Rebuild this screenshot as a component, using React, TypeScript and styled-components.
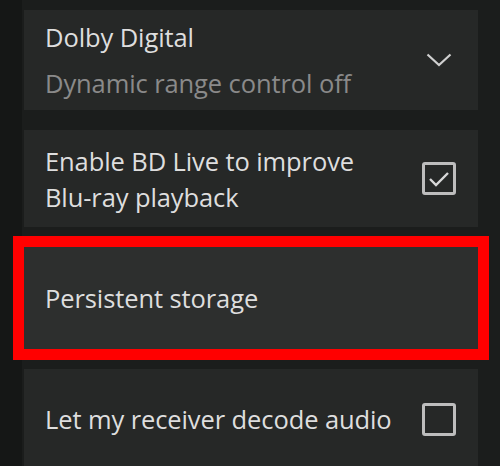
import React from "react";
import styled, {createGlobalStyle} from "styled-components";

const GlobalStyle = createGlobalStyle`
  html, body {
    margin: 0;
    padding: 0;
    background: #1b1d1c;
  }
  body {
    font-family: "Open Sans", "Noto Sans", sans-serif;
    color: #e4e4e4;
  }
`;

const Screen = styled.div`
  width: 500px;
  height: 466px;
  overflow: hidden;
  display: flex;
  background: #1b1d1c;
`;

const SideStrip = styled.div`
  width: 22px;
  flex-shrink: 0;
  background: #151716;
`;

const List = styled.div`
  flex: 1;
  display: flex;
  flex-direction: column;
  gap: 20px;
  padding: 10px 22px 0 2px;
`;

const Card = styled.div<{$height: number; $selected?: boolean}>`
  height: ${p => p.$height}px;
  flex-shrink: 0;
  display: flex;
  align-items: center;
  justify-content: space-between;
  padding: 0 22px 0 21px;
  background: ${p => (p.$selected ? "#2d2f2e" : "#262827")};
  outline: ${p => (p.$selected ? "11px solid #ff0000" : "none")};
`;

const TextBlock = styled.div`
  display: flex;
  flex-direction: column;
`;

const Title = styled.div`
  font-size: 25.5px;
  line-height: 36px;
  color: #dedede;
  letter-spacing: -0.1px;
`;

const Subtitle = styled.div`
  font-size: 25.5px;
  line-height: 36px;
  margin-top: 10px;
  color: #8a8a8a;
  letter-spacing: -0.1px;
`;

const Chevron = styled.svg`
  width: 26px;
  height: 14px;
  margin-right: 4px;
`;

const Box = styled.div`
  width: 34px;
  height: 33px;
  box-sizing: border-box;
  border: 3px solid #bdbdbd;
  border-radius: 3px;
  display: flex;
  align-items: center;
  justify-content: center;
`;

const Checkbox = ({checked}: {checked: boolean}) => (
    <Box>
        {checked && (
            <svg width="22" height="16" viewBox="0 0 22 16">
                <path d="M2 8 L8 14 L20 2" fill="none" stroke="#d8d8d8" strokeWidth="2.4" />
            </svg>
        )}
    </Box>
);

export default function App() {
    return (
        <>
            <GlobalStyle />
            <Screen>
                <SideStrip />
                <List>
                    <Card $height={100}>
                        <TextBlock>
                            <Title>Dolby Digital</Title>
                            <Subtitle>Dynamic range control off</Subtitle>
                        </TextBlock>
                        <Chevron viewBox="0 0 26 14">
                            <path d="M1.5 1.5 L13 12 L24.5 1.5" fill="none" stroke="#d0d0d0" strokeWidth="2.2" />
                        </Chevron>
                    </Card>
                    <Card $height={97}>
                        <TextBlock>
                            <Title>Enable BD Live to improve</Title>
                            <Title>Blu-ray playback</Title>
                        </TextBlock>
                        <Checkbox checked />
                    </Card>
                    <Card $height={102} $selected>
                        <Title>Persistent storage</Title>
                    </Card>
                    <Card $height={100}>
                        <Title>Let my receiver decode audio</Title>
                        <Checkbox checked={false} />
                    </Card>
                </List>
            </Screen>
        </>
    );
}
